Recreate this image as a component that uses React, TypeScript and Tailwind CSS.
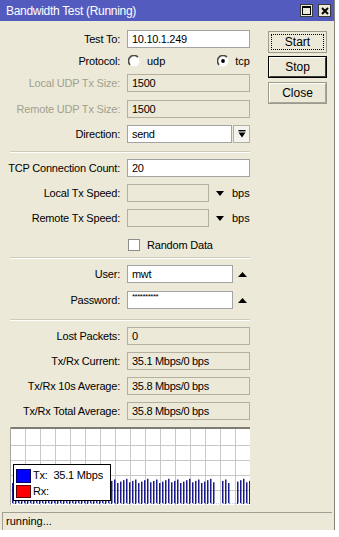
import React from "react";

const FONT = "font-['Liberation_Sans',Arial,sans-serif]";

function Label({ children, dim }: { children: React.ReactNode; dim?: boolean }) {
  return (
    <div
      className={`w-[120px] shrink-0 text-right tracking-[-0.2px] ${dim ? "text-[#a3a08f]" : "text-black"}`}
    >
      {children}
    </div>
  );
}

function Field({
  value,
  width = 123,
  grey,
}: {
  value?: string;
  width?: number;
  grey?: boolean;
}) {
  return (
    <div
      className={`h-[18px] pl-[4px] leading-[16px] tracking-[-0.3px] border whitespace-nowrap overflow-hidden ${
        grey ? "bg-[#ece9d8] border-[#b3b0a0]" : "bg-white border-[#a3a3a3]"
      }`}
      style={{ width }}
    >
      {value}
    </div>
  );
}

function Row({ className = "", children }: { className?: string; children: React.ReactNode }) {
  return <div className={`flex items-center h-[18px] ${className}`}>{children}</div>;
}

function Sep({ className = "" }: { className?: string }) {
  return (
    <div className={`ml-[10px] w-[240px] h-[2px] border-t border-t-[#cdcabb] border-b border-b-white ${className}`} />
  );
}

function Radio({ on }: { on?: boolean }) {
  return (
    <svg width="12" height="12" viewBox="0 0 12 12" className="shrink-0">
      <circle cx="6" cy="6" r="5.5" fill="#fff" />
      <path d="M9.9 2.1 A5.5 5.5 0 0 0 2.1 9.9" stroke="#4a4a4a" strokeWidth="1.6" fill="none" />
      {on && <circle cx="6" cy="6" r="1.9" fill="#000" />}
    </svg>
  );
}

function TriDown() {
  return (
    <svg width="8" height="5" viewBox="0 0 8 5" className="shrink-0">
      <polygon points="0,0 8,0 4,5" fill="#000" />
    </svg>
  );
}

function TriUp() {
  return (
    <svg width="9" height="5" viewBox="0 0 9 5" className="shrink-0">
      <polygon points="0,5 9,5 4.5,0" fill="#000" />
    </svg>
  );
}

function Chart() {
  const xs: number[] = [];
  for (let i = 0; i < 80; i++) {
    const x = 2 + i * 3;
    if ((x >= 206 && x <= 210) || (x >= 219 && x <= 225)) continue;
    xs.push(x);
  }
  return (
    <div className="relative ml-[10px] mt-[7px] w-[240px] h-[78px] bg-white">
      <svg width="240" height="78" viewBox="0 0 240 78" className="block">
        {Array.from({ length: 16 }, (_, i) => (
          <line key={`v${i}`} x1={15 * (i + 1) + 0.5} y1="0" x2={15 * (i + 1) + 0.5} y2="78" stroke="#c8c8c8" />
        ))}
        {[18, 33, 48, 63].map((y) => (
          <line key={`h${y}`} x1="0" y1={y + 0.5} x2="240" y2={y + 0.5} stroke="#c8c8c8" />
        ))}
        {xs.map((x, i) => {
          const h = 21 + ((i * 37) % 7) * 0.7;
          return <rect key={x} x={x} y={77 - h} width="1.5" height={h} fill="#1b1b8a" />;
        })}
        <line x1="0" y1="76.5" x2="240" y2="76.5" stroke="#c9d3f0" strokeDasharray="1 1" />
        <rect x="0" y="0" width="240" height="2" fill="#7d7b72" />
        <rect x="0" y="0" width="1" height="78" fill="#a9a79b" />
      </svg>
      <div className="absolute left-[3px] top-[37px] w-[98px] h-[37px] bg-white border border-black px-[2px] pt-[3px]">
        <div className="flex items-center h-[15px]">
          <div className="w-[15px] h-[14px] bg-[#0000ff] border border-[#000060]" />
          <span className="ml-[2px] text-[11px] tracking-[-0.2px]">Tx:&nbsp;&nbsp;35.1 Mbps</span>
        </div>
        <div className="flex items-center h-[15px] mt-[1px]">
          <div className="w-[15px] h-[13px] bg-[#ff0000] border border-[#600000]" />
          <span className="ml-[2px] text-[11px] tracking-[-0.2px]">Rx:</span>
        </div>
      </div>
    </div>
  );
}

function WinButton({ label, kind }: { label: string; kind: "focus" | "default" | "plain" }) {
  const outer = kind === "default" ? "border border-black" : "border border-[#9c9a8f]";
  const inner =
    kind === "focus"
      ? "w-[53px] h-[16px] border border-dotted border-black"
      : kind === "default"
        ? "w-full h-full border-t border-l border-white border-r border-b border-r-[#3c3b36] border-b-[#3c3b36]"
        : "w-full h-full border-t border-l border-white border-r border-b border-r-[#a8a698] border-b-[#a8a698]";
  return (
    <div className={`w-[59px] h-[22px] bg-[#ece9d8] ${outer} flex items-center justify-center`}>
      <div className={`flex items-center justify-center leading-none text-[12px] ${inner}`}>{label}</div>
    </div>
  );
}

export default function App() {
  return (
    <div className={`${FONT} text-[11px] text-black bg-white w-[339px] h-[537px]`}>
      <div className="w-[335px] h-[530px] bg-[#ece9d8] border-r border-r-[#85837a] flex flex-col">
        {/* Title bar */}
        <div className="h-[21px] bg-[#535cbe] flex items-center justify-between pl-[6px] pr-[3px] shrink-0">
          <span className="text-white text-[12px] tracking-[-0.3px]">Bandwidth Test (Running)</span>
          <div className="flex gap-[5px]">
            <div className="w-[13px] h-[13px] bg-[#ece9d8] border border-[#3a3a3a] flex items-center justify-center">
              <svg width="9" height="9" viewBox="0 0 9 9">
                <rect x="0.5" y="0.5" width="8" height="8" fill="none" stroke="#000" />
                <rect x="0" y="0" width="9" height="2" fill="#000" />
              </svg>
            </div>
            <div className="w-[13px] h-[13px] bg-[#ece9d8] border border-[#3a3a3a] flex items-center justify-center">
              <svg width="8" height="8" viewBox="0 0 8 8">
                <path d="M1 1 L7 7 M7 1 L1 7" stroke="#000" strokeWidth="2" />
              </svg>
            </div>
          </div>
        </div>

        {/* Body */}
        <div className="flex flex-1">
          <div className="w-[258px] shrink-0 flex flex-col">
            <Row className="mt-[9px]">
              <Label>Test To:</Label>
              <div className="ml-[7px]">
                <Field value="10.10.1.249" />
              </div>
            </Row>
            <Row className="mt-[4px]">
              <Label>Protocol:</Label>
              <div className="ml-[8px] flex items-center w-[122px]">
                <Radio />
                <span className="ml-[7px]">udp</span>
                <div className="ml-auto flex items-center">
                  <Radio on />
                  <span className="ml-[6px]">tcp</span>
                </div>
              </div>
            </Row>
            <Row className="mt-[4px]">
              <Label dim>Local UDP Tx Size:</Label>
              <div className="ml-[7px]">
                <Field value="1500" grey />
              </div>
            </Row>
            <Row className="mt-[8px]">
              <Label dim>Remote UDP Tx Size:</Label>
              <div className="ml-[7px]">
                <Field value="1500" grey />
              </div>
            </Row>
            <Row className="mt-[7px]">
              <Label>Direction:</Label>
              <div className="ml-[7px] flex">
                <Field value="send" width={105} />
                <div className="ml-[1px] w-[17px] h-[18px] bg-[#f4f3ee] border border-[#b3b0a0] flex items-center justify-center">
                  <svg width="8" height="8" viewBox="0 0 8 8">
                    <rect x="0.5" y="0" width="7" height="1.4" fill="#000" />
                    <polygon points="0.5,2.6 7.5,2.6 4,7.5" fill="#000" />
                  </svg>
                </div>
              </div>
            </Row>
            <Sep className="mt-[8px]" />
            <Row className="mt-[6px]">
              <Label>TCP Connection Count:</Label>
              <div className="ml-[7px]">
                <Field value="20" />
              </div>
            </Row>
            <Row className="mt-[7px]">
              <Label>Local Tx Speed:</Label>
              <div className="ml-[7px] flex items-center">
                <Field grey width={82} />
                <div className="ml-[7px]">
                  <TriDown />
                </div>
                <span className="ml-[8px]">bps</span>
              </div>
            </Row>
            <Row className="mt-[7px]">
              <Label>Remote Tx Speed:</Label>
              <div className="ml-[7px] flex items-center">
                <Field grey width={82} />
                <div className="ml-[7px]">
                  <TriDown />
                </div>
                <span className="ml-[8px]">bps</span>
              </div>
            </Row>
            <Row className="mt-[9px]">
              <div className="ml-[128px] w-[12px] h-[12px] bg-white border border-[#8e8e8e]" />
              <span className="ml-[7px] tracking-[-0.2px]">Random Data</span>
            </Row>
            <Sep className="mt-[3px]" />
            <Row className="mt-[6px]">
              <Label>User:</Label>
              <div className="ml-[7px] flex items-center">
                <Field value="mwt" width={106} />
                <div className="ml-[5px]">
                  <TriUp />
                </div>
              </div>
            </Row>
            <Row className="mt-[8px]">
              <Label>Password:</Label>
              <div className="ml-[7px] flex items-center">
                <div className="w-[106px] h-[18px] bg-white border border-[#a3a3a3] pl-[4px] text-[8px] leading-[10px] tracking-[-0.5px]">
                  **********
                </div>
                <div className="ml-[5px]">
                  <TriUp />
                </div>
              </div>
            </Row>
            <Sep className="mt-[10px]" />
            <Row className="mt-[6px]">
              <Label>Lost Packets:</Label>
              <div className="ml-[7px]">
                <Field value="0" grey />
              </div>
            </Row>
            <Row className="mt-[7px]">
              <Label>Tx/Rx Current:</Label>
              <div className="ml-[7px]">
                <Field value="35.1 Mbps/0 bps" grey />
              </div>
            </Row>
            <Row className="mt-[7px]">
              <Label>Tx/Rx 10s Average:</Label>
              <div className="ml-[7px]">
                <Field value="35.8 Mbps/0 bps" grey />
              </div>
            </Row>
            <Row className="mt-[7px]">
              <Label>Tx/Rx Total Average:</Label>
              <div className="ml-[7px]">
                <Field value="35.8 Mbps/0 bps" grey />
              </div>
            </Row>
            <Chart />
          </div>

          <div className="ml-[10px] pt-[10px] flex flex-col">
            <WinButton label="Start" kind="focus" />
            <div className="mt-[3px]">
              <WinButton label="Stop" kind="default" />
            </div>
            <div className="mt-[4px]">
              <WinButton label="Close" kind="plain" />
            </div>
          </div>
        </div>

        {/* Status bar */}
        <div className="mx-[2px] h-[18px] border-t border-l border-[#a19f92] pl-[3px] leading-[16px] shrink-0">
          running...
        </div>
      </div>
    </div>
  );
}
